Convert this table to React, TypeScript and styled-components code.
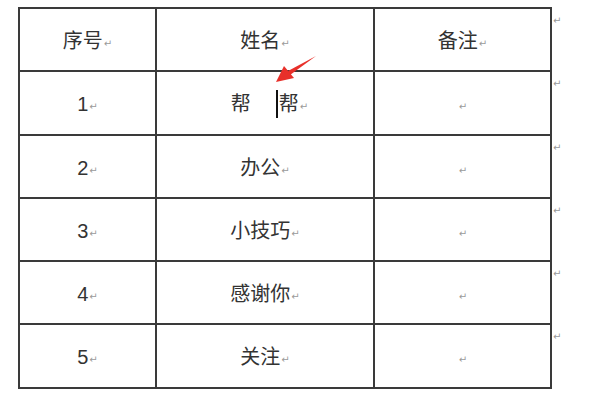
import React from "react";
import styled, { createGlobalStyle } from "styled-components";

const Global = createGlobalStyle`
  html, body { margin: 0; padding: 0; background: #fff; }
  body { width: 600px; height: 400px; overflow: hidden; font-family: "Noto Sans CJK SC", sans-serif; }
`;

const Page = styled.div`
  position: relative;
  width: 600px;
  height: 400px;
  padding: 7px 0 0 18px;
  box-sizing: border-box;
  display: flex;
  align-items: flex-start;
`;

const Table = styled.div`
  display: grid;
  grid-template-columns: 137px 218px 177px;
  grid-template-rows: 63px 64px 63px 63px 63px 64px;
  border-top: 2px solid #3a3a3a;
  border-left: 2px solid #3a3a3a;
`;

const Cell = styled.div`
  border-right: 2px solid #3a3a3a;
  border-bottom: 2px solid #3a3a3a;
  display: flex;
  align-items: center;
  justify-content: center;
  color: #333;
  font-family: "Liberation Sans", "Noto Sans CJK SC", sans-serif;
  font-size: 20px;
  line-height: 1;
  padding-top: 2px;
  box-sizing: border-box;
`;

const EditLine = styled.span`
  display: inline-flex;
  align-items: center;
  padding-left: 9px;
`;

const Mark = styled.span`
  font-family: "DejaVu Sans", sans-serif;
  font-size: 10px;
  color: #9a9a9a;
  margin-left: 1px;
  align-self: center;
  transform: translateY(3px);
`;

const SideMarks = styled.div`
  display: grid;
  grid-template-rows: 63px 64px 63px 63px 63px 64px;
  padding-top: 2px;
  margin-left: 1px;
`;

const SideMark = styled.span`
  font-family: "DejaVu Sans", sans-serif;
  font-size: 10px;
  color: #9a9a9a;
  padding-top: 6px;
`;

const Gap = styled.span`
  display: inline-block;
  width: 25px;
`;

const Caret = styled.span`
  display: inline-block;
  width: 2px;
  height: 28px;
  background: #111;
  margin-right: 1px;
`;

const Arrow = styled.svg`
  position: absolute;
  left: 270px;
  top: 52px;
`;

const rows: [string, React.ReactNode, string][] = [
  ["序号", "姓名", "备注"],
  ["1", null, ""],
  ["2", "办公", ""],
  ["3", "小技巧", ""],
  ["4", "感谢你", ""],
  ["5", "关注", ""],
];

export default function App() {
  return (
    <>
      <Global />
      <Page>
        <Table>
          {rows.map((r, i) => (
            <React.Fragment key={i}>
              <Cell>
                {r[0]}
                <Mark>↵</Mark>
              </Cell>
              <Cell>
                {i === 1 ? (
                  <EditLine>
                    帮<Gap />
                    <Caret />帮<Mark>↵</Mark>
                  </EditLine>
                ) : (
                  <>
                    {r[1]}
                    <Mark>↵</Mark>
                  </>
                )}
              </Cell>
              <Cell>
                {r[2]}
                <Mark>↵</Mark>
              </Cell>
            </React.Fragment>
          ))}
        </Table>
        <SideMarks>
          {rows.map((_, i) => (
            <SideMark key={i}>↵</SideMark>
          ))}
        </SideMarks>
        <Arrow width="50" height="34" viewBox="0 0 50 34">
          <path d="M46 4 L18 19 L20 23 Z" fill="#e8302a" />
          <path d="M6 30 L14 14 L24 26 Z" fill="#e8302a" />
        </Arrow>
      </Page>
    </>
  );
}
